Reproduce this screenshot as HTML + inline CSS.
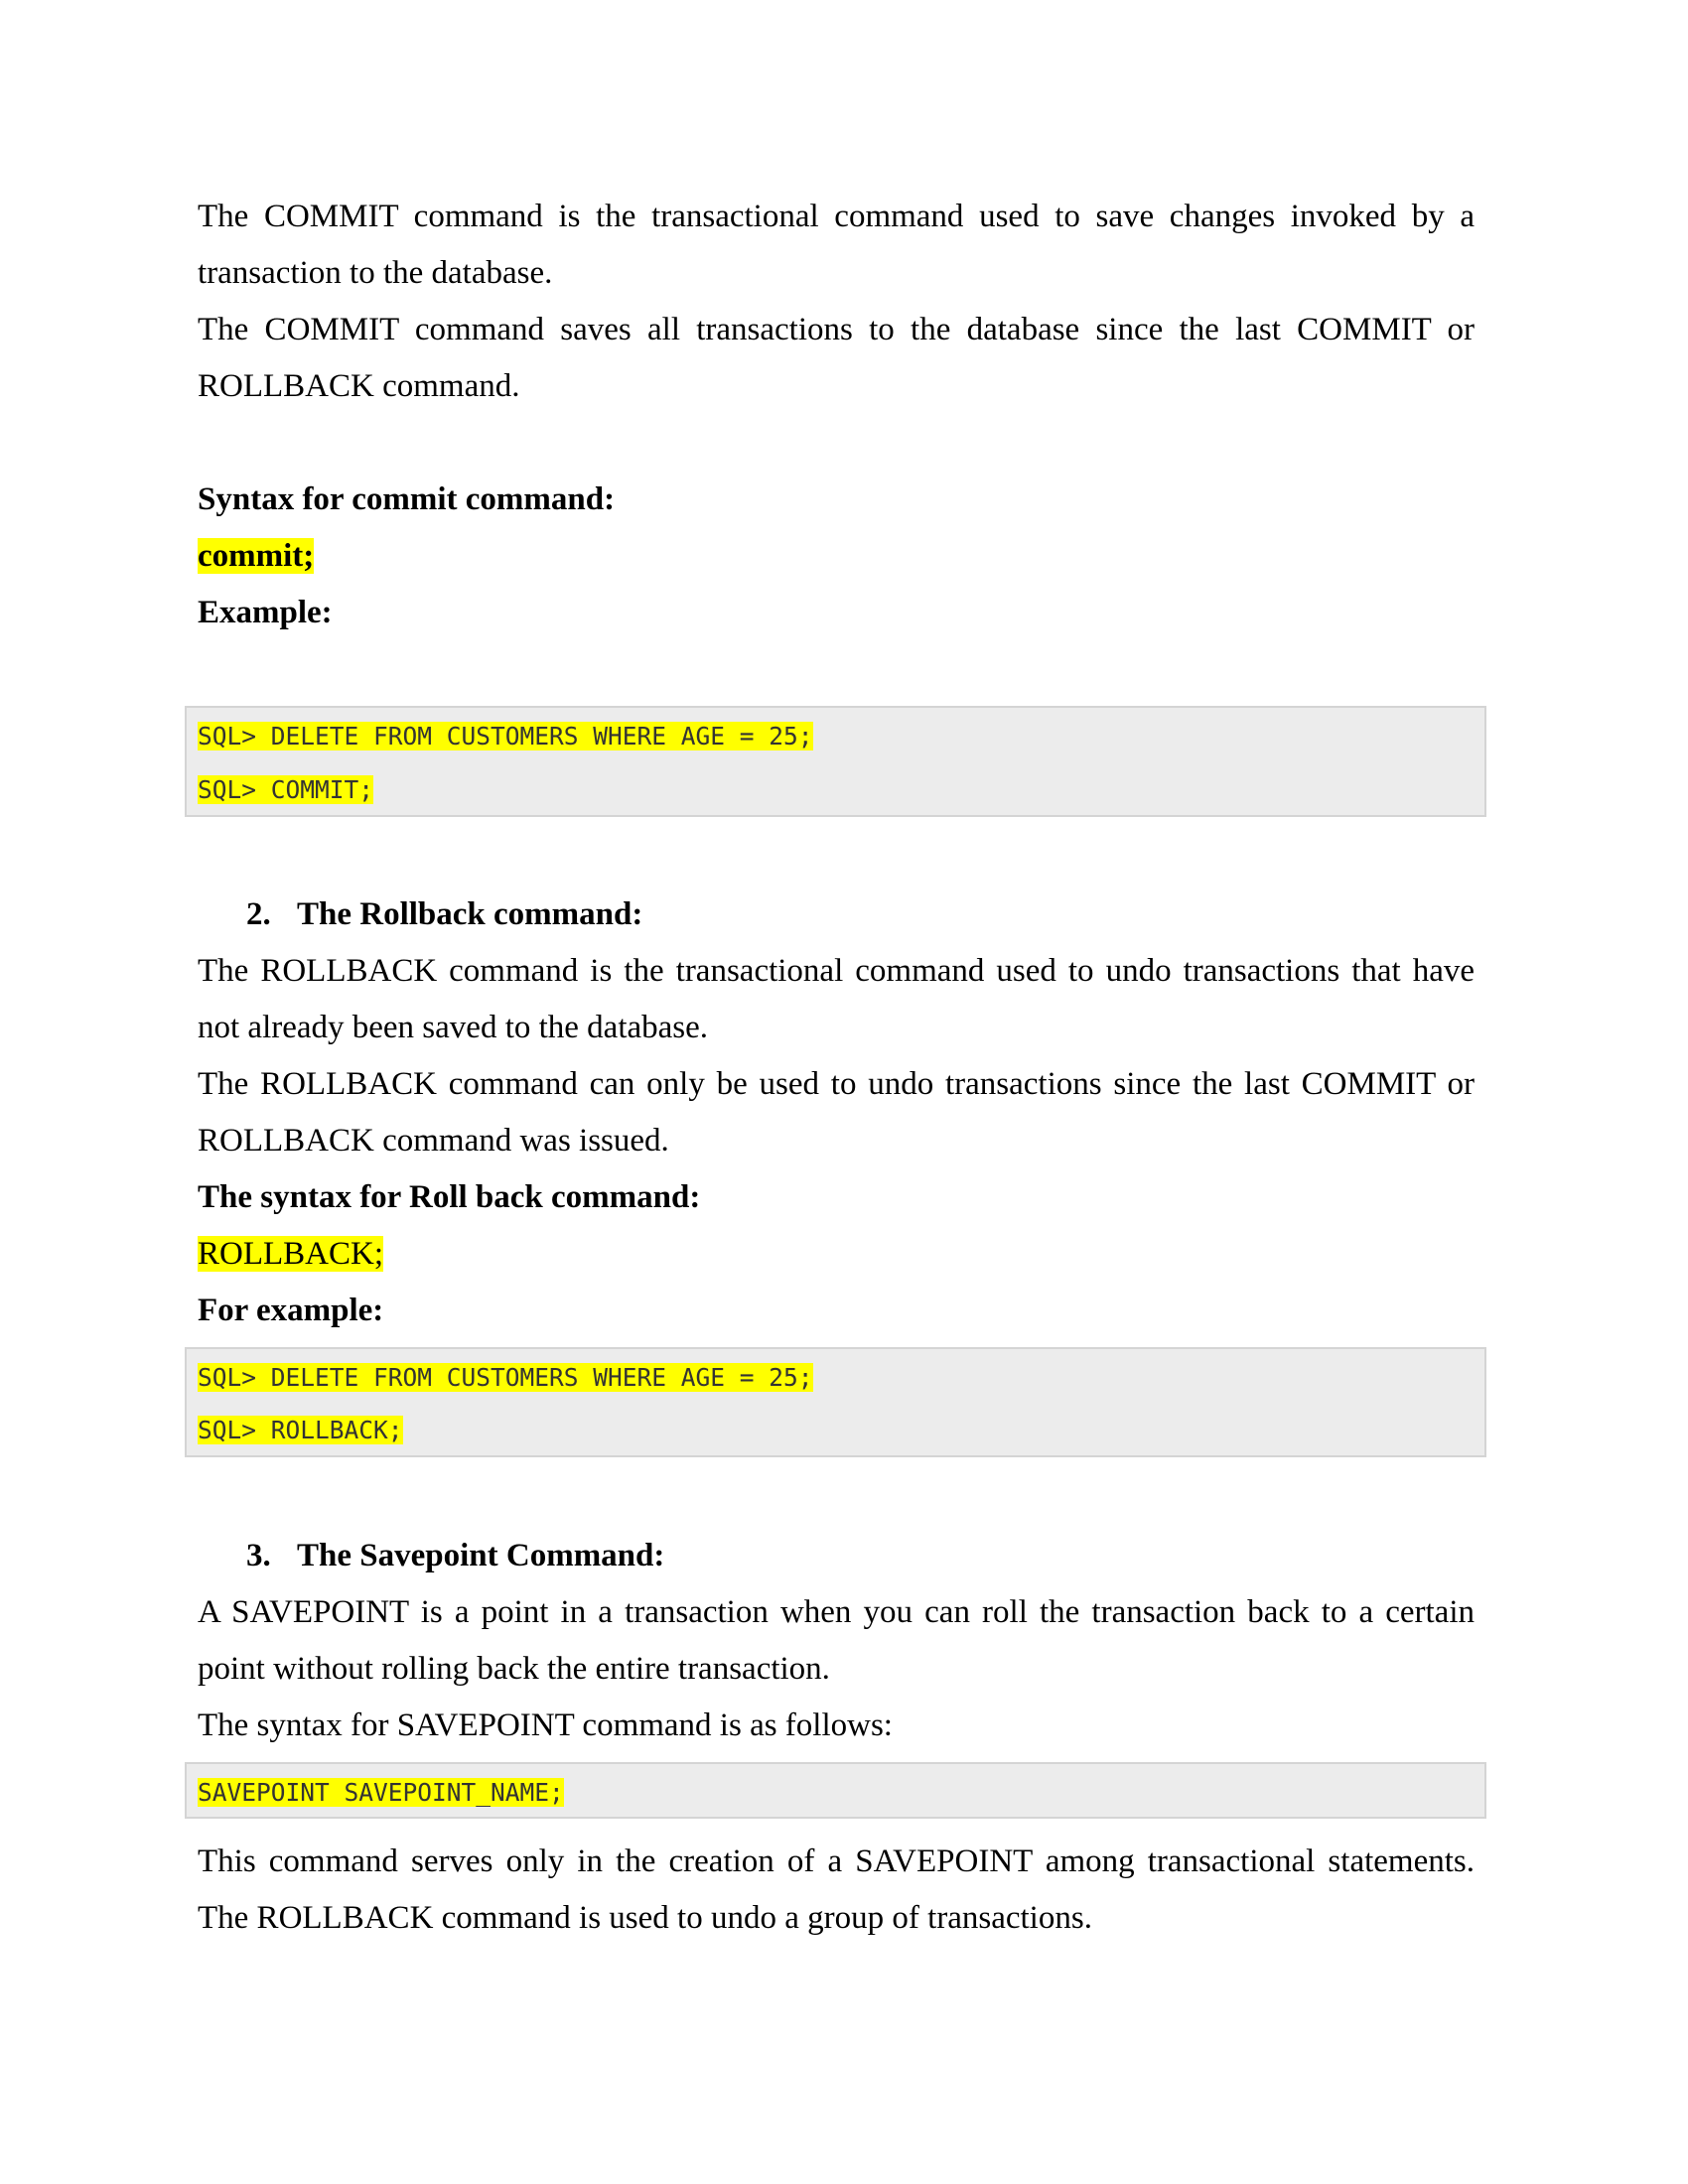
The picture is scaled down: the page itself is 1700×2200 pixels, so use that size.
<!DOCTYPE html>
<html><head><meta charset="utf-8"><style>
body{margin:0;width:1700px;height:2200px;background:#fff;position:relative;overflow:hidden}
.t{position:absolute;left:199px;width:1286px;font-family:"Liberation Serif",serif;font-size:33px;line-height:57px;height:57px;color:#000;white-space:nowrap}
.j{text-align:justify;text-align-last:justify;white-space:normal}
.b{font-weight:bold}
.hl{background:#ffff00}
.box{position:absolute;left:186px;width:1311px;background:#ececec;border:2px solid #d4d4d4;box-sizing:border-box}
.c{position:absolute;left:199px;font-family:"DejaVu Sans Mono","Liberation Mono",monospace;font-size:24.5px;line-height:30px;color:#333;white-space:pre}
.c span{background:#ffff00}
</style></head><body>
<div class="t j" style="top:190px">The COMMIT command is the transactional command used to save changes invoked by a</div>
<div class="t" style="top:247px">transaction to the database.</div>
<div class="t j" style="top:304px">The COMMIT command saves all transactions to the database since the last COMMIT or</div>
<div class="t" style="top:361px">ROLLBACK command.</div>
<div class="t b" style="top:475px">Syntax for commit command:</div>
<div class="t b" style="top:532px"><span class="hl">commit;</span></div>
<div class="t b" style="top:589px">Example:</div>
<div class="box" style="top:711px;height:112px"></div>
<div class="c" style="top:727px"><span>SQL&gt; DELETE FROM CUSTOMERS WHERE AGE = 25;</span></div>
<div class="c" style="top:781px"><span>SQL&gt; COMMIT;</span></div>
<div class="t b" style="top:893px;left:248px">2.<span style="position:absolute;left:51px">The Rollback command:</span></div>
<div class="t j" style="top:950px">The ROLLBACK command is the transactional command used to undo transactions that have</div>
<div class="t" style="top:1007px">not already been saved to the database.</div>
<div class="t j" style="top:1064px">The ROLLBACK command can only be used to undo transactions since the last COMMIT or</div>
<div class="t" style="top:1121px">ROLLBACK command was issued.</div>
<div class="t b" style="top:1178px">The syntax for Roll back command:</div>
<div class="t" style="top:1235px"><span class="hl">ROLLBACK;</span></div>
<div class="t b" style="top:1292px">For example:</div>
<div class="box" style="top:1357px;height:111px"></div>
<div class="c" style="top:1373px"><span>SQL&gt; DELETE FROM CUSTOMERS WHERE AGE = 25;</span></div>
<div class="c" style="top:1426px"><span>SQL&gt; ROLLBACK;</span></div>
<div class="t b" style="top:1539px;left:248px">3.<span style="position:absolute;left:51px">The Savepoint Command:</span></div>
<div class="t j" style="top:1596px">A SAVEPOINT is a point in a transaction when you can roll the transaction back to a certain</div>
<div class="t" style="top:1653px">point without rolling back the entire transaction.</div>
<div class="t" style="top:1710px">The syntax for SAVEPOINT command is as follows:</div>
<div class="box" style="top:1775px;height:57px"></div>
<div class="c" style="top:1791px"><span>SAVEPOINT SAVEPOINT_NAME;</span></div>
<div class="t j" style="top:1847px">This command serves only in the creation of a SAVEPOINT among transactional statements.</div>
<div class="t" style="top:1904px">The ROLLBACK command is used to undo a group of transactions.</div>
</body></html>
